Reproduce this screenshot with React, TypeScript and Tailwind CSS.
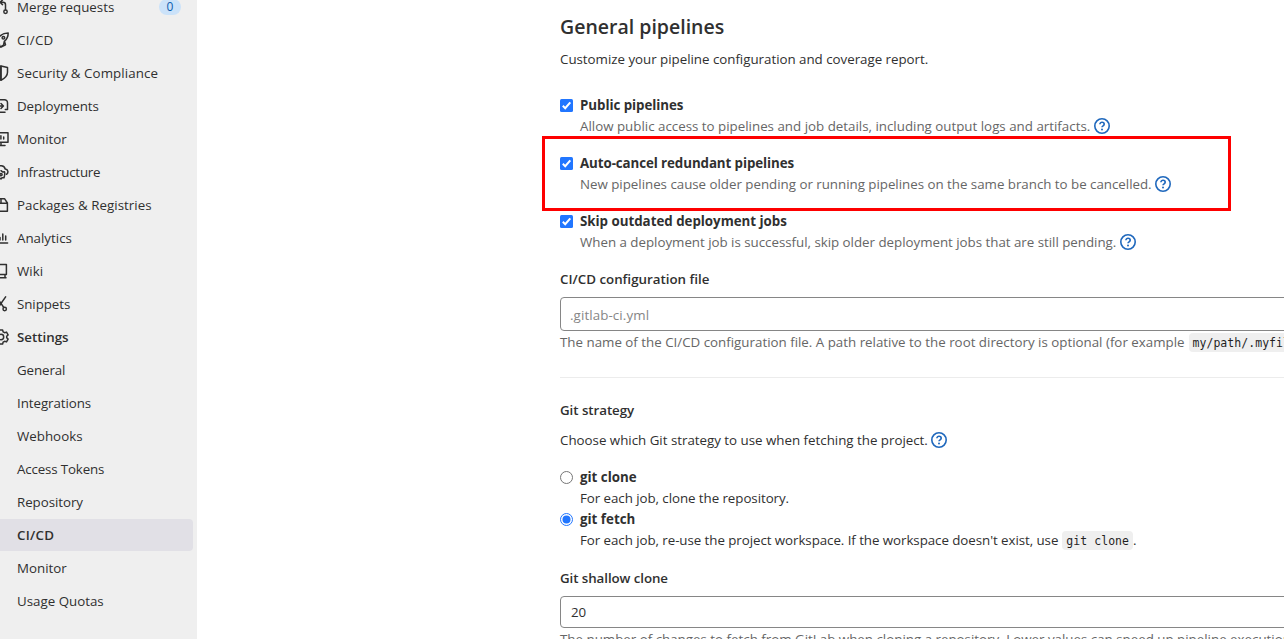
import React from "react";

type NavItem = { label: string; icon?: React.ReactNode; count?: number; bold?: boolean; active?: boolean; fit?: string };

function Glyph({ children }: { children: React.ReactNode }) {
  return (
    <svg
      viewBox="0 0 16 16"
      className="h-4 w-4 shrink-0"
      fill="none"
      stroke="#303030"
      strokeWidth="1.5"
      strokeLinecap="round"
      strokeLinejoin="round"
    >
      {children}
    </svg>
  );
}

const icons = {
  merge: (
    <Glyph>
      <circle cx="3" cy="12.5" r="1.7" />
      <circle cx="12.5" cy="12.8" r="1.7" />
      <path d="M3 10.5v-6M9.5 1 7 3.3l2.5 2.3M7.500 3.300h2.500a2.500 2.500 0 0 1 2.500 2.500v5" />
    </Glyph>
  ),
  rocket: (
    <Glyph>
      <path d="M15.200.9c-4 0-7.200 1.400-9.600 4.600L2.500 6.500 1 9l3 .8 2.300 2.300L7 15l3.500-1.800.8-3.800c2.600-2.200 3.900-4.800 3.900-8.500zM11.600 9.600l.9 3.200L8 15.200" />
      <circle cx="10.400" cy="5.800" r="1.300" />
    </Glyph>
  ),
  shield: (
    <Glyph>
      <path d="M8 1 1.500 2.500v4.800c0 3.400 2.500 6 6.500 7.900 4-1.900 6.500-4.500 6.500-7.900V2.500z" />
      <path d="M7.900 1.500v13" strokeWidth="2" />
    </Glyph>
  ),
  deployments: (
    <Glyph>
      <path d="M1 10.500V4.200A2.500 2.500 0 0 1 3.500 1.700h8a3 3 0 0 1 3 3v6.800h-2.200M3 14.300h9M4 8h6M8 5.500 10.400 8 8 10.500" />
    </Glyph>
  ),
  monitor: (
    <Glyph>
      <path d="M1 1.800h14v9.400H1zM8 11.500v3M4.500 14.500h7.500M5 6v2M7.900 4.800V8M10.700 6v2" />
    </Glyph>
  ),
  cloud: (
    <Glyph>
      <path d="M4 10.500a3.200 3.200 0 0 1-.3-6.300C5.500.6 11.200.8 12.200 5c3 .2 3.600 3.800 1.300 5.300" />
      <circle cx="8" cy="10.600" r="1.100" />
      <path d="M8 6.700l1.500 1.200 2-.1.300 1.900-.3 2-.5 2-2 .1L8 15l-1.500-1.200-2-.1" />
    </Glyph>
  ),
  package: (
    <Glyph>
      <path d="M1.800 6 4 1.700h7.500L14.400 6v8.300H1.800zM1.800 6.300h12.500M8 1.700v4.500" />
    </Glyph>
  ),
  chart: (
    <Glyph>
      <path d="M1 13h13.600M4 10V6M7 10V7.500M9.800 10V4M12.700 10V6" />
    </Glyph>
  ),
  book: (
    <Glyph>
      <path d="M13.400 11.300V1.600H4.200a2 2 0 0 0-2 2v8.800M13.400 11.500H4a1.600 1.600 0 0 0 0 3.200h9M12 11.700v2.800" />
    </Glyph>
  ),
  snippet: (
    <Glyph>
      <circle cx="4.300" cy="13" r="1.700" />
      <circle cx="11.700" cy="13" r="1.700" />
      <path d="M12.600.9 5.200 11.500M3.400.9l7.400 10.600" />
    </Glyph>
  ),
  settings: (
    <Glyph>
      <circle cx="8" cy="8" r="2.700" />
      <path d="M6.400.9h3.200l.5 1.900 1.500.9 1.900-.6 1.600 2.800-1.400 1.300v1.600l1.400 1.300-1.600 2.800-1.900-.6-1.500.9-.5 1.900H6.400l-.5-1.900-1.500-.9-1.900.6L.9 10.100l1.400-1.300V7.200L.9 5.900l1.600-2.800 1.900.6 1.500-.9z" />
    </Glyph>
  ),
};

const nav: NavItem[] = [
  { label: "Merge requests", icon: icons.merge, count: 0 },
  { label: "CI/CD", icon: icons.rocket, fit: "tracking-[0.3px]" },
  { label: "Security & Compliance", icon: icons.shield, fit: "tracking-[0.08px]" },
  { label: "Deployments", icon: icons.deployments, fit: "tracking-[-0.06px]" },
  { label: "Monitor", icon: icons.monitor },
  { label: "Infrastructure", icon: icons.cloud, fit: "tracking-[-0.2px]" },
  { label: "Packages & Registries", icon: icons.package, fit: "tracking-[0.03px]" },
  { label: "Analytics", icon: icons.chart },
  { label: "Wiki", icon: icons.book },
  { label: "Snippets", icon: icons.snippet, fit: "tracking-[-0.06px]" },
  { label: "Settings", icon: icons.settings, bold: true },
  { label: "General", fit: "tracking-[-0.1px]" },
  { label: "Integrations", fit: "tracking-[-0.06px]" },
  { label: "Webhooks" },
  { label: "Access Tokens", fit: "tracking-[-0.15px]" },
  { label: "Repository", fit: "tracking-[-0.06px]" },
  { label: "CI/CD", active: true, bold: true, fit: "tracking-[0.3px]" },
  { label: "Monitor" },
  { label: "Usage Quotas" },
];

function Sidebar() {
  return (
    <nav className="-mt-[9px] flex w-[197px] shrink-0 flex-col gap-px bg-[#efefef] pr-1">
      {nav.map((n, i) => (
        <div key={i} className={`flex h-8 shrink-0 items-center rounded-r ${n.active ? "bg-[#e1e0e6]" : ""}`}>
          <span className="-ml-[7px] mr-2 flex w-4 shrink-0">{n.icon}</span>
          <span className={`whitespace-nowrap ${n.bold ? "font-semibold" : ""} ${n.fit ?? ""}`}>{n.label}</span>
          {n.count !== undefined && (
            <span className="mr-3 ml-auto flex h-4 w-[22px] items-center justify-center rounded-full bg-[#cbe2f9] text-xs text-[#0b5cad]">
              {n.count}
            </span>
          )}
        </div>
      ))}
    </nav>
  );
}

function HelpIcon() {
  return (
    <svg viewBox="0 0 16 16" className="h-4 w-4 shrink-0" fill="none" stroke="#1f68bd" strokeWidth="1.6">
      <circle cx="8" cy="8" r="7.2" />
      <path d="M5.900 6.300c0-2.800 4.300-2.700 4.300 0 0 1.500-2.200 1.500-2.200 3" />
      <circle cx="8" cy="11.400" r="1" fill="#1f68bd" stroke="none" />
    </svg>
  );
}

function CheckMark() {
  return (
    <svg viewBox="0 0 13 13" className="h-[13px] w-[13px] shrink-0">
      <rect width="13" height="13" rx="1.5" fill="#2176ff" />
      <path d="M2.800 6.800 5.200 9.200 10.300 3.300" fill="none" stroke="#fff" strokeWidth="2" />
    </svg>
  );
}

function RadioMark({ checked }: { checked?: boolean }) {
  return (
    <svg viewBox="0 0 13 13" className="mt-0.5 h-[13px] w-[13px] shrink-0">
      <circle cx="6.500" cy="6.500" r="6" fill="#fff" stroke={checked ? "#2176ff" : "#767676"} />
      {checked && <circle cx="6.500" cy="6.500" r="4" fill="#2176ff" />}
    </svg>
  );
}

function Option({
  mark,
  title,
  titleFit = "",
  raised,
  highlight,
  children,
}: {
  mark: React.ReactNode;
  title: string;
  titleFit?: string;
  raised?: boolean;
  highlight?: boolean;
  children: React.ReactNode;
}) {
  return (
    <div className="relative">
      <div className="flex h-[21px] items-center gap-[7px]">
        {mark}
        <span className={`font-bold ${titleFit} ${raised ? "pb-0.5" : ""}`}>{title}</span>
      </div>
      <div className={`flex h-[21px] items-center pl-5 ${raised ? "pb-0.5" : ""}`}>{children}</div>
      {highlight && (
        <div className="pointer-events-none absolute -top-[17px] -left-[18px] h-[75px] w-[689px] border-3 border-[#fe0000]" />
      )}
    </div>
  );
}

function Code({ children }: { children: React.ReactNode }) {
  return (
    <code className="mt-px ml-1 flex h-[19px] items-center rounded bg-[#efefef] px-1 pt-0.5 font-['DejaVu_Sans_Mono',monospace] text-[11.5px] tracking-[0.04px] text-[#1f1f1f]">
      {children}
    </code>
  );
}

export default function App() {
  return (
    <div className="flex h-[639px] w-full overflow-hidden bg-white font-['Open_Sans',sans-serif] text-[13.33px] leading-5 text-[#303030]">
      <Sidebar />
      <main className="ml-[363px] flex w-[800px] shrink-0 flex-col pt-3 whitespace-nowrap">
        <h2 className="h-[30px] text-[19.5px] leading-[30px] font-semibold">General pipelines</h2>
        <p className="mt-[7px] flex h-[21px] items-center tracking-[-0.02px]">
          Customize your pipeline configuration and coverage report.
        </p>

        <div className="mt-[26px] flex flex-col gap-4">
          <Option mark={<CheckMark />} title="Public pipelines" titleFit="tracking-[-0.05px]" raised>
            <span className="mr-1 text-[#666]">
              Allow public access to pipelines and job details, including output logs and artifacts.
            </span>
            <HelpIcon />
          </Option>
          <Option
            mark={<CheckMark />}
            title="Auto-cancel redundant pipelines"
            titleFit="tracking-[-0.09px]"
            raised
            highlight
          >
            <span className="mr-[3px] tracking-[-0.02px] text-[#666]">
              New pipelines cause older pending or running pipelines on the same branch to be cancelled.
            </span>
            <HelpIcon />
          </Option>
          <Option mark={<CheckMark />} title="Skip outdated deployment jobs" titleFit="tracking-[-0.02px]" raised>
            <span className="mr-1 tracking-[-0.02px] text-[#666]">
              When a deployment job is successful, skip older deployment jobs that are still pending.
            </span>
            <HelpIcon />
          </Option>
        </div>

        <label className="mt-4 flex h-[21px] items-center font-semibold">CI/CD configuration file</label>
        <div className="mt-2 flex h-[34px] shrink-0 items-center rounded border border-[#868686] px-[9px] pt-0.5 tracking-[0.1px] text-[#868686]">
          .gitlab-ci.yml
        </div>
        <div className="flex h-[21px] shrink-0 items-center text-[#666]">
          <span>
            The name of the CI/CD configuration file. A path relative to the root directory is optional (for example
          </span>
          <Code>my/path/.myfile.yml@</Code>
        </div>
        <hr className="mt-[25px] border-[#ececec]" />

        <h3 className="mt-[22px] flex h-[21px] items-center font-semibold tracking-[-0.06px]">Git strategy</h3>
        <p className="mt-2.5 flex h-[21px] items-center">
          <span className="mr-[3px] tracking-[-0.01px]">Choose which Git strategy to use when fetching the project.</span>
          <HelpIcon />
        </p>
        <div className="mt-4 flex flex-col">
          <Option mark={<RadioMark />} title="git clone">
            <span className="tracking-[-0.06px]">For each job, clone the repository.</span>
          </Option>
          <Option mark={<RadioMark checked />} title="git fetch">
            <span className="tracking-[-0.06px]">
              For each job, re-use the project workspace. If the workspace doesn't exist, use
            </span>
            <Code>git clone</Code>
            <span>.</span>
          </Option>
        </div>

        <label className="mt-[18px] flex h-[21px] items-center font-semibold tracking-[-0.08px]">Git shallow clone</label>
        <div className="mt-2 flex h-8 shrink-0 items-center rounded border border-[#868686] px-2.5">20</div>
        <p className="flex h-[21px] shrink-0 items-center text-[#666]">
          The number of changes to fetch from GitLab when cloning a repository. Lower values can speed up pipeline execution.
        </p>
      </main>
    </div>
  );
}
